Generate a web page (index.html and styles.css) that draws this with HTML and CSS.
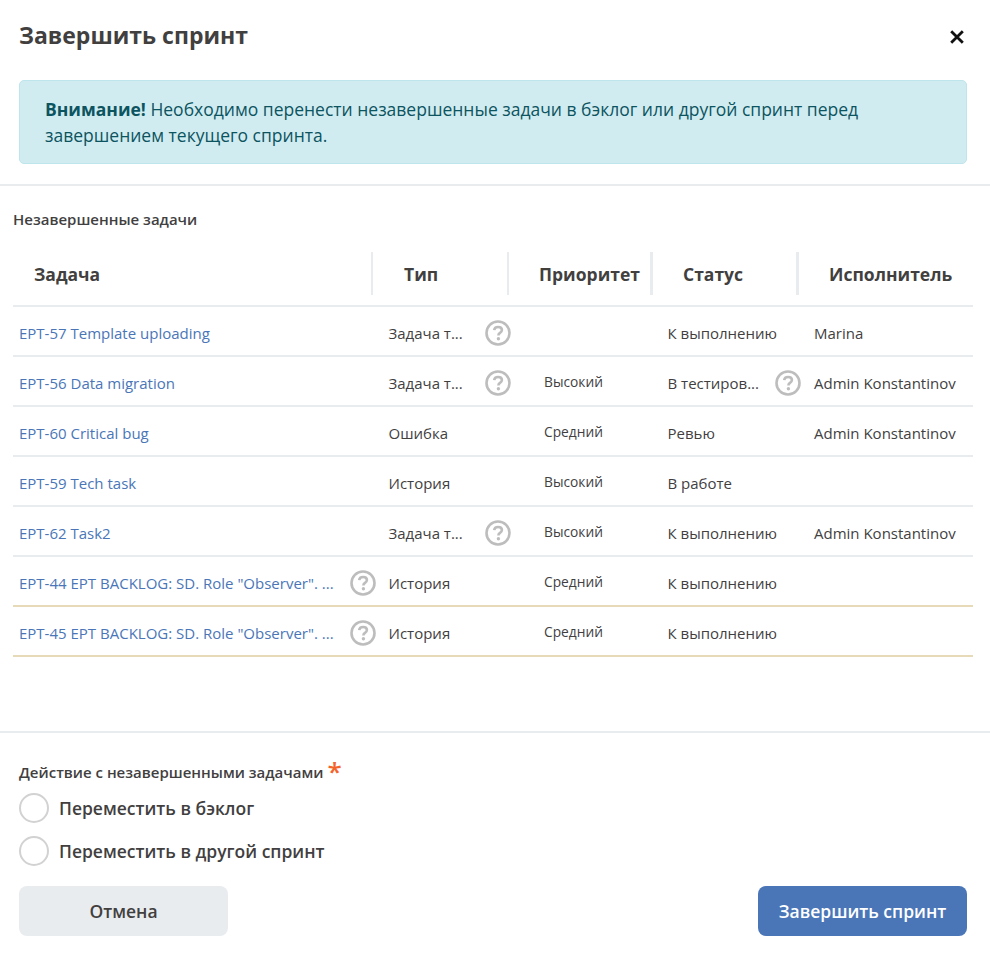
FILE: index.html
```html
<!DOCTYPE html>
<html lang="ru">
<head>
<meta charset="utf-8">
<title>Завершить спринт</title>
<link rel="stylesheet" href="styles.css">
</head>
<body>
<svg class="defs" width="0" height="0" aria-hidden="true">
  <symbol id="help" viewBox="0 0 26 26">
    <circle cx="13" cy="13" r="11.5" fill="none" stroke="#bdbdbd" stroke-width="2.6"/>
    <path d="M9.2 10.2c.2-2 1.7-3.2 3.9-3.2 2.2 0 3.8 1.2 3.8 3 0 1.4-.8 2.2-1.9 2.9-1.1.7-1.6 1.2-1.6 2.5" fill="none" stroke="#bdbdbd" stroke-width="2.6"/>
    <circle cx="13.4" cy="18.8" r="1.7" fill="#bdbdbd"/>
  </symbol>
</svg>
<main class="modal">
  <header class="modal-head">
    <h1 class="title">Завершить спринт</h1>
    <button class="close" aria-label="Закрыть">
      <svg width="14" height="14" viewBox="0 0 14 14"><path d="M1.2 1.2l11.6 11.6M12.8 1.2l-11.6 11.6" stroke="#111" stroke-width="2.8" fill="none"/></svg>
    </button>
  </header>
  <div class="alert"><b>Внимание!</b> Необходимо перенести незавершенные задачи в бэклог или другой спринт перед завершением текущего спринта.</div>
  <section class="tasks">
    <h2 class="section-label">Незавершенные задачи</h2>
    <div class="head">
      <div class="th th-task">Задача</div>
      <div class="th th-type">Тип</div>
      <div class="th th-prio">Приоритет</div>
      <div class="th th-status">Статус</div>
      <div class="th th-user">Исполнитель</div>
    </div>
    <div class="row">
      <div class="c c-task"><a class="link">EPT-57 Template uploading</a></div>
      <div class="c c-type"><span class="clip">Задача т...</span><svg class="help"><use href="#help"/></svg></div>
      <div class="c c-prio"></div>
      <div class="c c-status"><span class="clip">К выполнению</span></div>
      <div class="c c-user">Marina</div>
    </div>
    <div class="row">
      <div class="c c-task"><a class="link">EPT-56 Data migration</a></div>
      <div class="c c-type"><span class="clip">Задача т...</span><svg class="help"><use href="#help"/></svg></div>
      <div class="c c-prio">Высокий</div>
      <div class="c c-status"><span class="clip wide">В тестиров...</span><svg class="help"><use href="#help"/></svg></div>
      <div class="c c-user">Admin Konstantinov</div>
    </div>
    <div class="row">
      <div class="c c-task"><a class="link">EPT-60 Critical bug</a></div>
      <div class="c c-type"><span class="clip">Ошибка</span></div>
      <div class="c c-prio">Средний</div>
      <div class="c c-status"><span class="clip">Ревью</span></div>
      <div class="c c-user">Admin Konstantinov</div>
    </div>
    <div class="row">
      <div class="c c-task"><a class="link">EPT-59 Tech task</a></div>
      <div class="c c-type"><span class="clip">История</span></div>
      <div class="c c-prio">Высокий</div>
      <div class="c c-status"><span class="clip">В работе</span></div>
      <div class="c c-user"></div>
    </div>
    <div class="row">
      <div class="c c-task"><a class="link">EPT-62 Task2</a></div>
      <div class="c c-type"><span class="clip">Задача т...</span><svg class="help"><use href="#help"/></svg></div>
      <div class="c c-prio">Высокий</div>
      <div class="c c-status"><span class="clip">К выполнению</span></div>
      <div class="c c-user">Admin Konstantinov</div>
    </div>
    <div class="row warn">
      <div class="c c-task"><a class="link long">EPT-44 EPT BACKLOG: SD. Role "Observer". ...</a><svg class="help"><use href="#help"/></svg></div>
      <div class="c c-type"><span class="clip">История</span></div>
      <div class="c c-prio">Средний</div>
      <div class="c c-status"><span class="clip">К выполнению</span></div>
      <div class="c c-user"></div>
    </div>
    <div class="row warn">
      <div class="c c-task"><a class="link long">EPT-45 EPT BACKLOG: SD. Role "Observer". ...</a><svg class="help"><use href="#help"/></svg></div>
      <div class="c c-type"><span class="clip">История</span></div>
      <div class="c c-prio">Средний</div>
      <div class="c c-status"><span class="clip">К выполнению</span></div>
      <div class="c c-user"></div>
    </div>
  </section>
  <form class="action">
    <div class="action-label">Действие с незавершенными задачами <span class="req">*</span></div>
    <label class="radio"><span class="dot"></span>Переместить в бэклог</label>
    <label class="radio"><span class="dot"></span>Переместить в другой спринт</label>
    <div class="buttons">
      <button type="button" class="btn btn-cancel">Отмена</button>
      <button type="button" class="btn btn-primary">Завершить спринт</button>
    </div>
  </form>
</main>
</body>
</html>
```
FILE: styles.css
```css
* { box-sizing: border-box; }
html, body { margin: 0; padding: 0; background: #fff; }
body { font-family: "Open Sans", sans-serif; color: #423f3f; width: 990px; height: 976px; overflow: hidden; }
.defs { position: absolute; }
.modal { display: flex; flex-direction: column; height: 976px; }
.modal-head { display: flex; align-items: center; justify-content: space-between; height: 72px; padding: 0 26px 0 19px; }
.title { margin: 0 0 2px; font-size: 23px; font-weight: 700; line-height: 32px; color: #423f3f; }
.close { border: 0; background: none; padding: 0; margin-top: 1px; width: 14px; height: 14px; display: flex; }
.alert { margin: 8px 23px 0 19px; height: 84px; padding: 15px 25px; background: #d1ecf1; border: 1px solid #bee5eb; border-radius: 5px; color: #0c5460; font-size: 17.5px; line-height: 26.25px; }
.alert b { font-weight: 700; }
.tasks { margin-top: 20px; border-top: 2px solid #e9ecef; border-bottom: 2px solid #e9ecef; height: 549px; padding: 0 17px 0 13px; }
.section-label { margin: 23px 0 0; font-size: 15px; font-weight: 600; line-height: 20px; color: #423f3f; }
.head, .row { display: grid; }
.head { grid-template-columns: 358px 136px 143px 146px 177px; margin-top: 21px; height: 57px; border-bottom: 2px solid #e9ecef; }
.row { grid-template-columns: 360px 136px 143px 146px 175px; height: 50px; border-bottom: 2px solid #e9ecef; font-size: 15px; }
.row.warn { border-bottom-color: #e6dab8; }
.th { height: 43px; margin-top: 2px; padding-left: 30px; font-size: 17.5px; font-weight: 700; line-height: 45px; border-left: 3px solid #e9ecef; color: #423f3f; }
.th-task { border-left: 0; padding-left: 21px; }
.th-type { border-left-width: 2px; padding-left: 31px; }
.th-prio { border-left-width: 2px; }
.c { display: flex; align-items: center; min-width: 0; padding-top: 4px; line-height: 20px; white-space: nowrap; }
.c-task { padding-left: 6px; }
.c-type { padding-left: 15.5px; }
.c-prio { padding: 1px 0 0 35px; font-size: 13.75px; }
.c-status { padding-left: 15.5px; }
.c-user { padding-left: 16px; }
.link { color: #4a76b8; }
.help { width: 26px; height: 26px; flex: none; }
.long { width: 331px; flex: none; }
.clip { width: 96.5px; flex: none; }
.clip.wide { width: 107.5px; }
.action { padding: 0 23px 0 19px; }
.action-label { margin-top: 27px; height: 24px; font-size: 15px; font-weight: 600; line-height: 24px; }
.req { color: #f4632a; font-size: 26px; font-weight: 600; line-height: 20px; vertical-align: -3px; }
.radio { display: flex; align-items: center; gap: 10px; height: 30px; margin-top: 13px; font-size: 17.5px; font-weight: 600; line-height: 30px; }
.action-label + .radio { margin-top: 9px; }
.dot { width: 30px; height: 30px; border: 2.5px solid #d2d2d2; border-radius: 50%; background: #fff; flex: none; }
.buttons { display: flex; justify-content: space-between; margin-top: 20px; }
.btn { width: 209px; height: 50px; border: 0; border-radius: 8px; font-family: inherit; font-size: 17.5px; font-weight: 600; padding: 0; }
.btn-cancel { background: #e9ecef; color: #423f3f; }
.btn-primary { background: #4a76b8; color: #fff; }
```
